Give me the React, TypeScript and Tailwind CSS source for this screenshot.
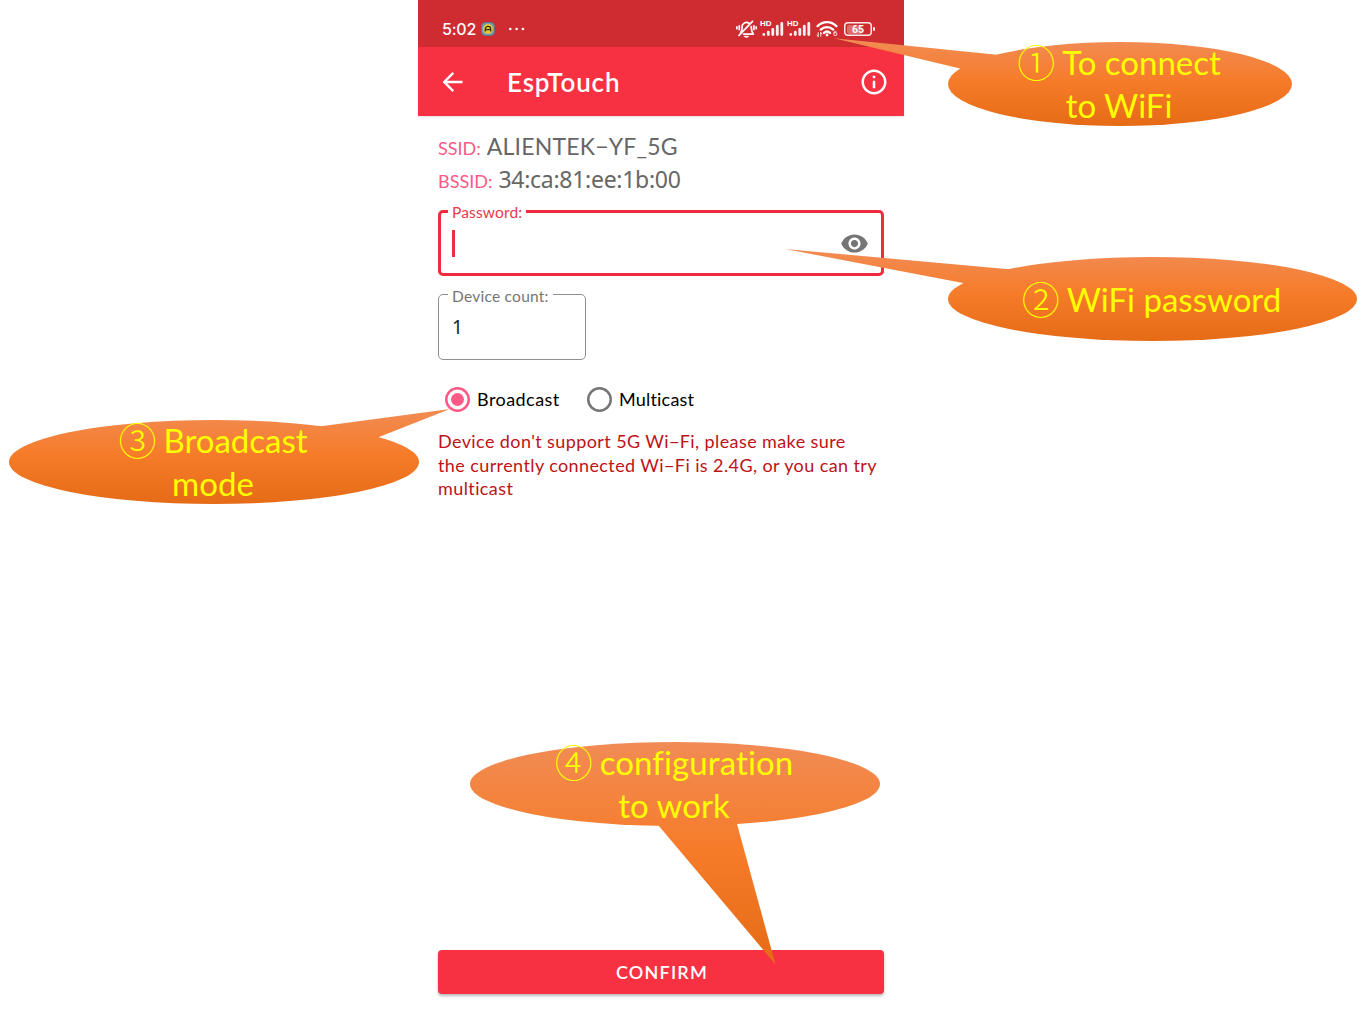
import React from "react";

const lato = "font-['Lato','Noto_Sans_CJK_SC',sans-serif]";

type CalloutProps = {
  box: string;
  textBox: string;
  viewBox: string;
  tail: string;
  ellipse: [number, number, number, number];
  top: number;
  bottom: number;
  id: string;
  children: React.ReactNode;
};

function Callout({ box, textBox, viewBox, tail, ellipse, top, bottom, id, children }: CalloutProps) {
  const [cx, cy, rx, ry] = ellipse;
  return (
    <div className={`absolute ${box}`}>
      <svg className="absolute inset-0 h-full w-full overflow-visible" viewBox={viewBox}>
        <defs>
          <linearGradient id={id} gradientUnits="userSpaceOnUse" x1="0" y1={top} x2="0" y2={bottom}>
            <stop offset="0" stopColor="#f18c55" />
            <stop offset="0.5" stopColor="#f67b28" />
            <stop offset="1" stopColor="#e56b17" />
          </linearGradient>
        </defs>
        <ellipse cx={cx} cy={cy} rx={rx} ry={ry} fill={`url(#${id})`} />
        <path d={tail} fill={`url(#${id})`} />
      </svg>
      <div
        className={`absolute flex flex-col items-center justify-center text-[33px] leading-[43px] whitespace-nowrap text-[#ffff00] [font-variant-ligatures:none] ${lato} ${textBox}`}
      >
        {children}
      </div>
    </div>
  );
}

function Num({ children }: { children: React.ReactNode }) {
  return (
    <span className="mr-[9px] inline-block w-[36px] text-center align-top font-['Noto_Sans_CJK_SC',sans-serif] text-[38px] leading-[40px] font-light">
      {children}
    </span>
  );
}

function Signal() {
  return (
    <div className="relative h-[17px] w-[23px] text-white">
      <span className="absolute top-0 -left-[1px] font-['Liberation_Sans',sans-serif] text-[8px] leading-[8px] font-bold">HD</span>
      <svg className="absolute inset-0" width="23" height="17" viewBox="0 0 23 17" fill="none" stroke="#fff" strokeOpacity="0.92" strokeWidth="2.8" strokeLinecap="round">
        <path d="M2.8 14.400v.1M7.300 12.200v2.300M11.800 9.300v5.200M16.300 6.200v8.300M20.800 3.400v11.100" />
      </svg>
    </div>
  );
}

function StatusBar() {
  return (
    <div className="flex h-[47px] items-start bg-[#cf2c31] pt-[20px] pl-[24px] text-white">
      <span className="w-[34px] font-['Inter',sans-serif] text-[16px] leading-[19px] font-medium tracking-[-0.2px] whitespace-nowrap">5:02</span>
      <svg className="mt-[2px] ml-[5px]" width="14" height="14" viewBox="0 0 14 14">
        <rect x="0.5" y="0.5" width="13" height="13" rx="4" fill="#7f9db0" stroke="#54758c" />
        <circle cx="7" cy="7" r="4.900" fill="#e8c52f" />
        <path d="M4.300 9.400V7a2.700 2.700 0 0 1 5.400 0v2.400M4.300 7.600h5.400" fill="none" stroke="#33341f" strokeWidth="1.300" />
      </svg>
      <svg className="mt-[7px] ml-[13px]" width="18" height="4" viewBox="0 0 18 4" fill="#fff">
        <circle cx="2.300" cy="2" r="1.300" />
        <circle cx="8.600" cy="2" r="1.300" />
        <circle cx="14.900" cy="2" r="1.300" />
      </svg>
      <div className="mr-[32px] ml-auto flex items-start">
        <svg width="21" height="19" viewBox="0 0 21 19" fill="none" stroke="#fff" strokeWidth="1.700" strokeLinecap="round" strokeLinejoin="round">
          <path d="M4.700 12.500c1.300-1 1.300-2.700 1.400-5A4.400 4.400 0 0 1 13 3.300M15.200 6.500c.1 3.500.5 5.600 2.100 7.600H7.500M16.500 1.300 3 15.300M3.300 5.800v3.800M.9 6.900v1.800M17.900 5.800v3.800M20.200 6.900v1.800" />
          <path d="M8.400 16.300h4.200c-.6 1.500-3.600 1.500-4.200 0Z" fill="#fff" strokeWidth="0.800" />
        </svg>
        <div className="ml-[4px]"><Signal /></div>
        <div className="ml-[4px]"><Signal /></div>
        <div className="relative ml-[5px] h-[18px] w-[22px]">
          <svg className="absolute inset-0" width="22" height="18" viewBox="0 0 22 18" fill="none" stroke="#fff" strokeWidth="2.300" strokeLinecap="round">
            <path d="M1.600 6.100c5.300-5.300 13.500-5.300 18.800 0M4.800 9.600c3.500-3.400 8.900-3.400 12.400 0M8 12.900c1.800-1.600 4.200-1.600 6 0" />
            <circle cx="11" cy="15" r="0.700" strokeWidth="1.400" />
            <path d="M2.200 12.700v3.700M1 15.100l1.200 1.300M4.800 16.200v-3.500M6 13.900l-1.200-1.200" strokeWidth="0.900" />
          </svg>
          <span className="absolute top-[10px] left-[17px] font-['Roboto',sans-serif] text-[8px] leading-[8px]">6</span>
        </div>
        <div className="relative mt-[2px] ml-[6px] flex h-[14px] w-[28px] items-center justify-center rounded-[4px] shadow-[inset_0_0_0_1.5px_rgba(255,255,255,0.9)]">
          <div className="absolute top-[2.500px] bottom-[2.500px] left-[2.500px] w-[15px] rounded-[2px] bg-white/30" />
          <span className="relative font-['Roboto',sans-serif] text-[10.500px] leading-[11px] font-bold">65</span>
          <div className="absolute -right-[3px] h-[4px] w-[2px] rounded bg-white/90" />
        </div>
      </div>
    </div>
  );
}

function AppBar() {
  return (
    <div className="flex h-[69px] items-center bg-[#f73142] pr-[15px] pl-[25px] text-white shadow-[0_1px_2px_rgba(0,0,0,0.12)]">
      <svg width="20" height="20" viewBox="0 0 20 20" fill="none" stroke="#fff" strokeWidth="2.400">
        <path d="M19.600 10H1.800M10.300.9 1.300 10l9 9.100" />
      </svg>
      <h1 className="ml-[44px] font-['Lato',sans-serif] text-[26px] leading-[32px] font-semibold tracking-[0.850px]">EspTouch</h1>
      <svg className="ml-auto" width="30" height="30" viewBox="0 0 24 24" fill="#fff">
        <path d="M11 7h2v2h-2zm0 4h2v6h-2zm1-9C6.480 2 2 6.480 2 12s4.480 10 10 10 10-4.480 10-10S17.520 2 12 2zm0 18c-4.410 0-8-3.590-8-8s3.590-8 8-8 8 3.590 8 8-3.590 8-8 8z" />
      </svg>
    </div>
  );
}

export default function App() {
  return (
    <div className="relative h-[1015px] w-[1364px] overflow-hidden bg-white">
      <main className="ml-[418px] flex h-[1015px] w-[486px] flex-col font-['Lato',sans-serif]">
        <StatusBar />
        <AppBar />
        <div className="flex flex-1 flex-col px-[20px] pt-[14px]">
          <div className="flex h-[33px] items-baseline gap-[6px] whitespace-nowrap">
            <span className="text-[18px] leading-[33px] text-[#f85a87]">SSID:</span>
            <span className="text-[23px] leading-[33px] tracking-[0.200px] text-[#666]">ALIENTEK−YF_5G</span>
          </div>
          <div className="flex h-[33px] items-baseline gap-[6px] whitespace-nowrap">
            <span className="text-[18px] leading-[33px] text-[#f85a87]">BSSID:</span>
            <span className="font-['Noto_Sans',sans-serif] text-[23px] leading-[33px] tracking-[-0.280px] text-[#666]">34:ca:81:ee:1b:00</span>
          </div>
          <fieldset className="mt-[7px] h-[73px] rounded-[5px] border-[3px] border-[#ef2c3e] pr-[12px] pl-[11px]">
            <legend className="-ml-[4px] px-[4px] pt-[2px] text-[15.500px] leading-[15px] tracking-[0.150px] text-[#e8394b]">Password:</legend>
            <div className="flex h-[47px] items-center">
              <div className="h-[27px] w-[3px] bg-[#e8303f]" />
              <svg className="ml-auto" width="29" height="29" viewBox="0 0 24 24" fill="#757575">
                <path d="M12 4.500C7 4.500 2.730 7.610 1 12c1.730 4.390 6 7.500 11 7.500s9.270-3.110 11-7.500c-1.730-4.390-6-7.500-11-7.500zM12 17c-2.760 0-5-2.240-5-5s2.240-5 5-5 5 2.240 5 5-2.240 5-5 5zm0-8c-1.660 0-3 1.340-3 3s1.340 3 3 3 3-1.340 3-3-1.340-3-3-3z" />
              </svg>
            </div>
          </fieldset>
          <fieldset className="mt-[10px] h-[74px] w-[148px] rounded-[5px] border border-[#8f8f8f] pl-[13px]">
            <legend className="-ml-[4px] px-[4px] pt-[4px] text-[15.500px] leading-[13px] tracking-[0.250px] text-[#757575]">Device count:</legend>
            <div className="flex h-[48px] items-center">
              <span className="font-['Noto_Sans',sans-serif] text-[19px] leading-[24px] text-[#222]">1</span>
            </div>
          </fieldset>
          <div className="mt-[25px] flex h-[29px] items-center pl-[7px] text-[18px] text-black">
            <span className="flex h-[25px] w-[25px] items-center justify-center rounded-full shadow-[inset_0_0_0_2.5px_#ff5a86]">
              <span className="h-[13px] w-[13px] rounded-full bg-[#ff5a86]" />
            </span>
            <span className="ml-[7px] w-[110px] tracking-[0.450px]">Broadcast</span>
            <span className="h-[25px] w-[25px] rounded-full shadow-[inset_0_0_0_2.5px_#757575]" />
            <span className="ml-[7px] tracking-[0.200px]">Multicast</span>
          </div>
          <p className="mt-[16px] text-[18px] leading-[23.500px] tracking-[0.400px] whitespace-nowrap text-[#bd1218]">
            Device don't support 5G Wi−Fi, please make sure
            <br />
            the currently connected Wi−Fi is 2.4G, or you can try
            <br />
            multicast
          </p>
          <button className="mt-auto mb-[21px] h-[44px] rounded-[4px] bg-[#f73142] pl-[2px] text-[18px] font-semibold tracking-[1.200px] text-white shadow-[0_2px_3px_rgba(0,0,0,0.28)]">
            CONFIRM
          </button>
        </div>
      </main>

      <Callout
        id="c1"
        box="left-[834px] top-[38px] h-[88px] w-[458px]"
        textBox="left-[113px] top-[4px] h-[84px] w-[344px]"
        viewBox="834 38 458 88"
        ellipse={[1120, 84, 172, 42]}
        top={38}
        bottom={126}
        tail="M834 38.300 997 54.800 1060 75 975 85 960 68.500Z"
      >
        <div><Num>①</Num>To connect</div>
        <div>to WiFi</div>
      </Callout>
      <Callout
        id="c2"
        box="left-[785px] top-[249px] h-[92px] w-[572px]"
        textBox="left-[162px] top-[8px] h-[84px] w-[409px]"
        viewBox="785 249 572 92"
        ellipse={[1152.5, 299, 204.5, 42]}
        top={249}
        bottom={341}
        tail="M785 249 1009 269.300 1060 290 975 298 963 283Z"
      >
        <div><Num>②</Num>WiFi password</div>
      </Callout>
      <Callout
        id="c3"
        box="left-[9px] top-[408px] h-[96px] w-[441px]"
        textBox="left-[-1px] top-[12px] h-[84px] w-[410px]"
        viewBox="9 408 441 96"
        ellipse={[214, 462, 205, 42]}
        top={408}
        bottom={504}
        tail="M450 409 379 437 300 450 321 426.300Z"
      >
        <div><Num>③</Num>Broadcast</div>
        <div>mode</div>
      </Callout>
      <Callout
        id="c4"
        box="left-[470px] top-[742px] h-[222px] w-[410px]"
        textBox="left-[-1px] top-0 h-[84px] w-[410px]"
        viewBox="470 742 410 222"
        ellipse={[675, 784, 205, 42]}
        top={742}
        bottom={964}
        tail="M775.500 964.500 658.500 825.500 680 800 720 800 737 824Z"
      >
        <div className="tracking-[0.100px]"><Num>④</Num>configuration</div>
        <div>to work</div>
      </Callout>
    </div>
  );
}
